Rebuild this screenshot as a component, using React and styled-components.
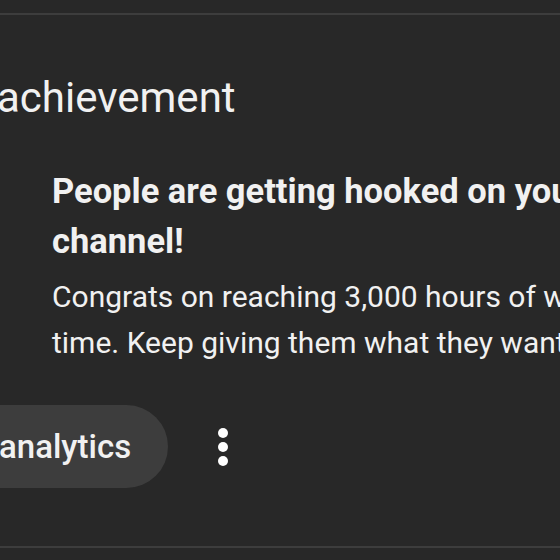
import React from 'react';
import styled, { createGlobalStyle } from 'styled-components';

const GlobalStyle = createGlobalStyle`
  html, body {
    margin: 0;
    padding: 0;
    background: #282828;
    overflow: hidden;
  }
  body {
    font-family: Roboto, 'Noto Sans', 'Liberation Sans', sans-serif;
    color: #f1f1f1;
  }
`

const Page = styled.div`
  width: 560px;
  height: 560px;
  padding-top: 13px;
  box-sizing: border-box;
  overflow: hidden;
`

const Card = styled.section`
  height: 535px;
  box-sizing: border-box;
  border-top: 2px solid #3d3d3d;
  border-bottom: 2px solid #3d3d3d;
  display: flex;
  flex-direction: column;
`

const Title = styled.h2`
  margin: 59px 0 0 -3px;
  font-size: 42px;
  line-height: 48px;
  font-weight: 400;
  color: #f1f1f1;
  white-space: nowrap;
`

const Body = styled.div`
  margin: 44px 0 0 52px;
  width: 580px;
  display: flex;
  flex-direction: column;
`

const Headline = styled.h3`
  margin: 0;
  font-size: 34.5px;
  line-height: 50px;
  font-weight: 700;
  color: #f1f1f1;
`

const Message = styled.p`
  margin: 8px 0 0;
  font-size: 30px;
  line-height: 46px;
  font-weight: 400;
  color: #f1f1f1;
`

const Actions = styled.div`
  margin-top: 39px;
  display: flex;
  align-items: center;
  gap: 31px;
`

const PillButton = styled.button`
  height: 83px;
  margin-left: -40px;
  padding: 0 37px 0 39px;
  border: none;
  border-radius: 42px;
  background: #3d3d3d;
  color: #f1f1f1;
  font-family: inherit;
  font-size: 33px;
  font-weight: 500;
`

const IconButton = styled.button`
  width: 48px;
  height: 48px;
  padding: 0;
  border: none;
  background: transparent;
  display: flex;
  align-items: center;
  justify-content: center;
`

function MoreIcon() {
  return (
    <svg width="12" height="40" viewBox="0 0 12 40">
      <circle cx="6" cy="6" r="5" fill="#fff" />
      <circle cx="6" cy="20" r="5" fill="#fff" />
      <circle cx="6" cy="34" r="5" fill="#fff" />
    </svg>
  );
}

export default function App() {
  return (
    <Page>
      <GlobalStyle />
      <Card>
        <Title>achievement</Title>
        <Body>
          <Headline>People are getting hooked on your channel!</Headline>
          <Message>Congrats on reaching 3,000 hours of watch time. Keep giving them what they want!</Message>
        </Body>
        <Actions>
          <PillButton>analytics</PillButton>
          <IconButton><MoreIcon /></IconButton>
        </Actions>
      </Card>
    </Page>
  );
}
